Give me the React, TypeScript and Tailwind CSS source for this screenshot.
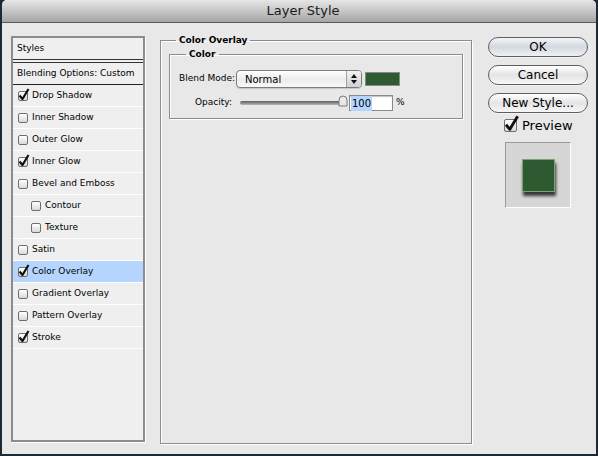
import React from 'react';

const font = { fontFamily: '"DejaVu Sans", "Liberation Sans", sans-serif' };

function Check({ checked, size = 10 }: { checked: boolean; size?: number }) {
    return (
        <span
            className="relative inline-block shrink-0 rounded-[2px] border border-[#6f6f6f] bg-gradient-to-b from-[#ffffff] to-[#d9d9d9] shadow-[inset_0_1px_0_#fff]"
            style={{ width: size, height: size }}
        >
            {checked && (
                <svg
                    className="absolute"
                    style={{ left: -1, top: -size * 0.35, width: size * 1.2, height: size * 1.3 }}
                    viewBox="0 0 12 13"
                >
                    <path d="M1.5 7.5 L4.5 11 L10.5 1" fill="none" stroke="#111" strokeWidth="2.2" strokeLinejoin="round" />
                </svg>
            )}
        </span>
    );
}

const styleRows = [
    { label: 'Drop Shadow', checked: true },
    { label: 'Inner Shadow', checked: false },
    { label: 'Outer Glow', checked: false },
    { label: 'Inner Glow', checked: true },
    { label: 'Bevel and Emboss', checked: false },
    { label: 'Contour', checked: false, indent: true },
    { label: 'Texture', checked: false, indent: true },
    { label: 'Satin', checked: false },
    { label: 'Color Overlay', checked: true, active: true },
    { label: 'Gradient Overlay', checked: false },
    { label: 'Pattern Overlay', checked: false },
    { label: 'Stroke', checked: true },
];

function AquaButton({ label, primary }: { label: string; primary?: boolean }) {
    return (
        <button
            className={
                'block h-[20px] w-full rounded-full border border-[#5e5e5e] text-[12px] leading-none text-black shadow-[0_1px_0_#f4f4f4] ' +
                (primary
                    ? 'bg-gradient-to-b from-[#f2f4f7] via-[#d4d9e0] to-[#eef1f4]'
                    : 'bg-gradient-to-b from-[#ffffff] via-[#e4e4e4] to-[#f7f7f7]')
            }
        >
            {label}
        </button>
    );
}

export default function App() {
    return (
        <div className="w-[598px] h-[456px] bg-[#1c2a33] pl-[2px] pr-[2px] pb-[2px] overflow-hidden" style={font}>
            <div className="flex flex-col h-[454px] rounded-t-[5px] overflow-hidden bg-[#e8e8e8]">
                {/* title bar */}
                <div className="h-[23px] shrink-0 flex items-center justify-center border-b border-[#5a5a5a] bg-gradient-to-b from-[#e6e6e6] via-[#c6c6c6] to-[#a6a6a6]">
                    <span className="text-[13px] text-[#1a1a1a] ml-[8px]">Layer Style</span>
                </div>

                <div className="flex items-start pl-[9px] pt-[11px]">
                    {/* styles list */}
                    <div className="mt-[2px] w-[134px] h-[406px] shrink-0 border-2 border-[#8c8c8c] bg-[#efefef] shadow-[1px_1px_0_#fff] text-[9px] text-black">
                        <div className="h-[22px] flex items-center pl-[4px] border-b border-[#333]">Styles</div>
                        <div className="h-[3px] border-b border-[#333]"></div>
                        <div className="h-[22px] flex items-center pl-[4px] border-b border-[#222]">Blending Options: Custom</div>
                        {styleRows.map((r) => (
                            <div
                                key={r.label}
                                className={
                                    'h-[22px] flex items-center gap-[4px] border-b border-[#ffffff] ' +
                                    (r.indent ? 'pl-[18px] ' : 'pl-[5px] ') +
                                    (r.active ? 'bg-[#b5d5ff]' : '')
                                }
                            >
                                <Check checked={r.checked} />
                                <span>{r.label}</span>
                            </div>
                        ))}
                    </div>

                    {/* color overlay group */}
                    <fieldset className="ml-[15px] w-[312px] h-[410px] shrink-0 border border-[#8c8c8c] shadow-[1px_1px_0_#fff,inset_1px_1px_0_#fff] pl-[8px] pr-[8px] pt-[2px] text-[9px]">
                        <legend className="ml-[7px] px-[3px] font-bold leading-[12px]">Color Overlay</legend>
                        <fieldset className="h-[71px] border border-[#8c8c8c] shadow-[1px_1px_0_#fff,inset_1px_1px_0_#fff] pl-[9px]">
                            <legend className="ml-[7px] px-[3px] font-bold leading-[12px]">Color</legend>
                            <div className="flex items-center h-[18px] mt-[10px]">
                                <span className="w-[53px] text-right whitespace-nowrap">Blend Mode:</span>
                                <div className="ml-[4px] w-[126px] h-[18px] flex rounded-[4px] border border-[#7c7c7c] bg-gradient-to-b from-[#ffffff] via-[#ececec] to-[#f8f8f8] shadow-[0_1px_1px_rgba(0,0,0,0.15)]">
                                    <span className="flex-1 flex items-center pl-[8px] text-[10px]">Normal</span>
                                    <span className="w-[15px] flex flex-col items-center justify-center gap-[2px] border-l border-[#a0a0a0] bg-gradient-to-b from-[#f4f4f4] to-[#d0d0d0] rounded-r-[3px]">
                                        <svg width="6" height="4" viewBox="0 0 6 4"><path d="M0 4 L3 0 L6 4 Z" fill="#111" /></svg>
                                        <svg width="6" height="4" viewBox="0 0 6 4"><path d="M0 0 L3 4 L6 0 Z" fill="#111" /></svg>
                                    </span>
                                </div>
                                <div className="ml-[3px] w-[35px] h-[14px] border border-[#8a8a8a] bg-[#2f5b31]"></div>
                            </div>
                            <div className="flex items-center h-[16px] mt-[7px]">
                                <span className="w-[53px] text-right">Opacity:</span>
                                <div className="relative ml-[8px] w-[108px] h-[12px]">
                                    <div className="absolute left-0 top-[4px] w-[104px] h-[4px] rounded-full bg-gradient-to-b from-[#5e5e5e] to-[#b8b8b8]"></div>
                                    <svg className="absolute right-[0px] top-[-2px]" width="10" height="12" viewBox="0 0 10 12">
                                        <path d="M1 11 L1 5 Q1 1 5 1 Q9 1 9 5 L9 11 Z" fill="#e8e8e8" stroke="#7a7a7a" strokeWidth="1" />
                                    </svg>
                                </div>
                                <div className="ml-[1px] w-[44px] h-[16px] flex items-center border border-[#8a8a8a] bg-white shadow-[inset_0_1px_1px_rgba(0,0,0,0.25)] pl-[1px] text-[10px]">
                                    <span className="bg-[#b5d5ff] px-[1px]">100</span>
                                </div>
                                <span className="ml-[3px]">%</span>
                            </div>
                        </fieldset>
                    </fieldset>

                    {/* buttons */}
                    <div className="ml-[16px] mt-[3px] w-[100px] shrink-0 flex flex-col">
                        <AquaButton label="OK" primary />
                        <div className="mt-[8px]"><AquaButton label="Cancel" /></div>
                        <div className="mt-[8px]"><AquaButton label="New Style..." /></div>
                        <div className="mt-[5px] h-[15px] flex items-center gap-[5px] pl-[16px] text-[13px]">
                            <Check checked size={13} />
                            <span>Preview</span>
                        </div>
                        <div className="mt-[9px] ml-[17px] w-[66px] h-[66px] flex items-center justify-center border border-[#9a9a9a] border-r-white border-b-white bg-[#d6d6d6]">
                            <div className="w-[33px] h-[33px] border border-[#7fa070] bg-[#2f5a31] shadow-[1px_4px_3px_rgba(0,0,0,0.75)]"></div>
                        </div>
                    </div>
                </div>
            </div>
        </div>
    );
}
